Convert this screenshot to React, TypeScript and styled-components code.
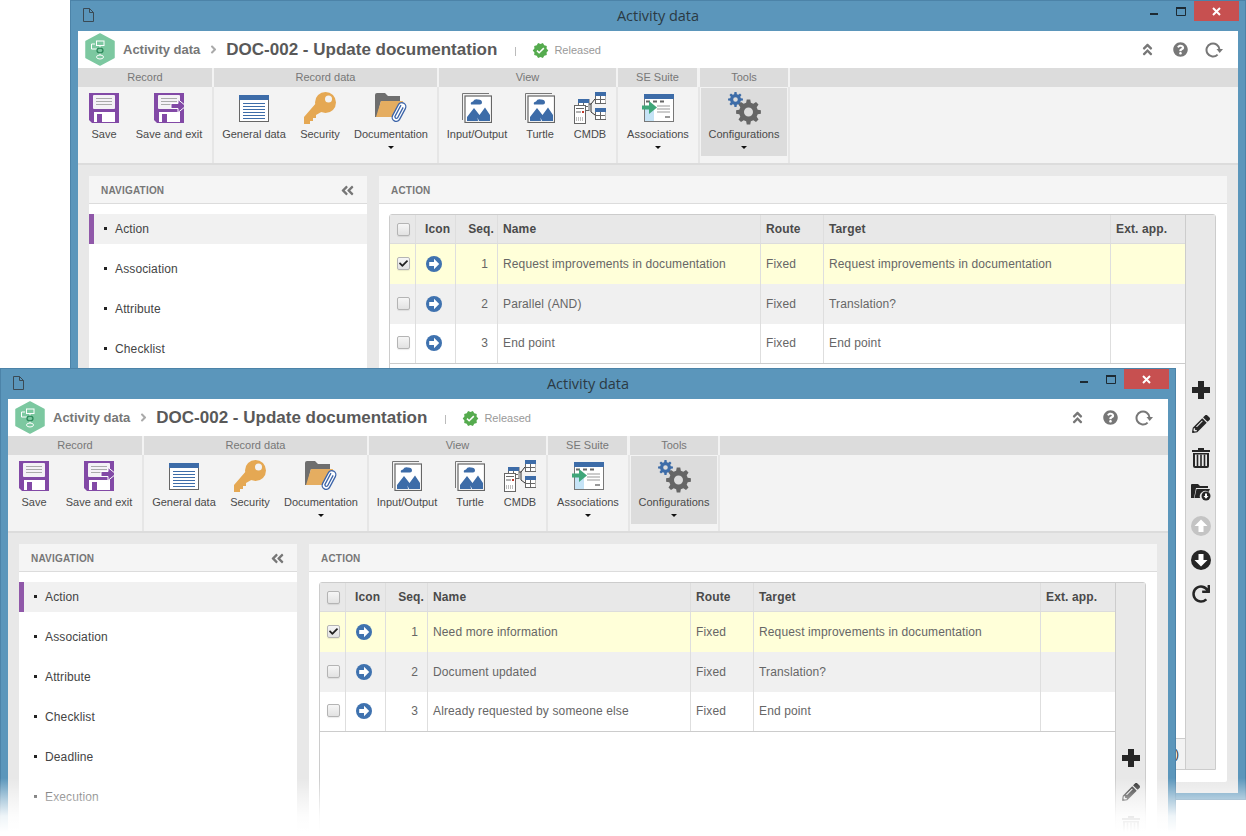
import * as React from "react";
import styled, { createGlobalStyle } from "styled-components";
import { FaPencilAlt, FaRedo, FaQuestionCircle, FaAngleDoubleUp, FaAngleDoubleLeft, FaCheck, FaAngleRight } from "react-icons/fa";
import { MdVerified } from "react-icons/md";

const BLEU_ICONE = "#3d6ca8";
const VIOLET = "#8249a6";
const ORANGE = "#e5a853";

const Global = createGlobalStyle`
    html, body { margin: 0; padding: 0; background: #fff; }
    body { font-family: "Liberation Sans", Arial, sans-serif; }
    * { box-sizing: border-box; }
`;

const Stage = styled.div`
    position: relative;
    width: 1246px;
    height: 836px;
    overflow: hidden;
    background: #fff;
`;

const Fade = styled.div`
    position: absolute;
    left: 0;
    right: 0;
    top: 778px;
    height: 58px;
    pointer-events: none;
    background: linear-gradient(to bottom, rgba(255,255,255,0) 0, rgba(255,255,255,.5) 20px, rgba(255,255,255,.9) 38px, #fff 54px);
`;

const Win = styled.div<{ $x: number; $y: number }>`
    position: absolute;
    left: ${p => p.$x}px;
    top: ${p => p.$y}px;
    width: 1176px;
    height: 800px;
    background: #5b96bb;
    border: 1px solid #4c83a8;
    padding: 0 7px 6px;
    display: flex;
    flex-direction: column;
`;

const TitleBar = styled.div`
    height: 30px;
    flex: none;
    display: grid;
    grid-template-columns: 1fr auto 1fr;
    align-items: center;
`;

const DocIcon = styled.div`
    padding: 0 0 3px 5px;
    display: flex;
`;

const TitleText = styled.div`
    font-family: "Open Sans", sans-serif;
    font-size: 14.5px;
    color: #2b3a44;
    padding-bottom: 1px;
`;

const WinControls = styled.div`
    justify-self: end;
    align-self: start;
    display: flex;
    align-items: flex-start;
    margin-right: -1px;
`;

const WinBtn = styled.div<{ $w: number }>`
    width: ${p => p.$w}px;
    height: 20px;
    display: flex;
    align-items: center;
    justify-content: center;
`;

const CloseBtn = styled(WinBtn)`
    background: #c75050;
    margin-left: 6px;
`;

const Client = styled.div`
    flex: 1;
    min-height: 0;
    background: #e8e8e8;
    display: flex;
    flex-direction: column;
`;

const Header = styled.div`
    height: 37px;
    flex: none;
    background: #fff;
    display: flex;
    align-items: center;
    padding: 0 8px 0 7px;
`;

const Crumb = styled.span`
    font-size: 13px;
    font-weight: bold;
    color: #777;
    margin-left: 8px;
`;

const CrumbArrow = styled.span`
    color: #aaa;
    display: flex;
    margin: 0 6px 0 7px;
`;

const DocTitle = styled.span`
    font-size: 17px;
    font-weight: bold;
    color: #595959;
`;

const Sep = styled.span`
    width: 1px;
    height: 9px;
    background: #bbb;
    margin: 3px 10px 0 18px;
`;

const Status = styled.span`
    display: flex;
    align-items: center;
    gap: 5px;
    font-size: 11px;
    color: #999;
    margin-top: 1px;
    margin-left: 6px;
`;

const HeaderTools = styled.div`
    margin-left: auto;
    display: flex;
    align-items: center;
    color: #777;
`;

const HeaderTool = styled.div`
    width: 33px;
    display: flex;
    justify-content: center;
`;

const Ribbon = styled.div`
    flex: none;
    display: flex;
    background: #f3f3f3;
    border-bottom: 2px solid #dcdcdc;
`;

const Group = styled.div<{ $w?: number }>`
    ${p => p.$w ? `width: ${p.$w}px; flex: none;` : "flex: 1;"}
    display: flex;
    flex-direction: column;
`;

const GroupHead = styled.div<{ $gap: number }>`
    height: 19px;
    line-height: 19px;
    background: #dcdcdc;
    margin-right: ${p => p.$gap}px;
    text-align: center;
    font-size: 11px;
    color: #777;
`;

const GroupBody = styled.div<{ $end?: boolean }>`
    height: 76px;
    padding-top: 1px;
    display: flex;
    border-right: ${p => p.$end ? "0" : "2px solid #e6e6e6"};
`;

const RibbonBtn = styled.div<{ $w: number; $active?: boolean }>`
    width: ${p => p.$w}px;
    height: 68px;
    flex: none;
    margin-left: ${p => p.$active ? 1 : 0}px;
    background: ${p => p.$active ? "#dcdcdc" : "transparent"};
    display: flex;
    flex-direction: column;
    align-items: center;
    padding-top: 2px;
    font-size: 11px;
    color: #4a4a4a;
`;

const RibbonIcon = styled.div`
    height: 36px;
    margin-bottom: 2px;
    display: flex;
    align-items: center;
    justify-content: center;
`;

const RibbonLabel = styled.div`
    line-height: 13px;
    white-space: nowrap;
`;

const Caret = styled.div`
    width: 0;
    height: 0;
    margin-top: 5px;
    border-left: 3px solid transparent;
    border-right: 3px solid transparent;
    border-top: 3px solid #111;
`;

const Body = styled.div`
    flex: 1;
    min-height: 0;
    display: flex;
    gap: 12px;
    padding: 11px;
`;

const Panel = styled.div<{ $w?: number }>`
    ${p => p.$w ? `width: ${p.$w}px; flex: none;` : "flex: 1; min-width: 0;"}
    background: #fff;
    border-radius: 2px;
    display: flex;
    flex-direction: column;
`;

const PanelHead = styled.div`
    height: 28px;
    flex: none;
    background: #f5f5f5;
    border-bottom: 1px solid #dcdcdc;
    padding: 2px 12px 0;
    display: flex;
    align-items: center;
    justify-content: space-between;
    font-size: 10px;
    letter-spacing: .2px;
    font-weight: bold;
    color: #777;
`;

const NavList = styled.div`
    padding-top: 10px;
    display: flex;
    flex-direction: column;
    gap: 10px;
`;

const NavItem = styled.div<{ $active?: boolean }>`
    height: 30px;
    display: flex;
    align-items: center;
    font-size: 12px;
    letter-spacing: .13px;
    color: #444;
    padding-left: ${p => p.$active ? 10 : 15}px;
    background: ${p => p.$active ? "#f1f1f1" : "transparent"};
    border-left: ${p => p.$active ? "5px solid #9058a9" : "0"};
    &::before {
        content: "";
        width: 3px;
        height: 3px;
        background: #222;
        margin: -1px 8px 0 0;
    }
`;

const GridWrap = styled.div`
    flex: 1;
    min-height: 0;
    margin: 10px 11px 12px 10px;
    border: 1px solid #ccc;
    border-radius: 3px 3px 0 3px;
    display: flex;
`;

const GridMain = styled.div`
    flex: 1;
    min-width: 0;
    display: flex;
    flex-direction: column;
`;

const COLONNES = "26px 40px 42px 263px 63px 287px 1fr";

const Row = styled.div<{ $bg: string; $h: number }>`
    display: grid;
    grid-template-columns: ${COLONNES};
    height: ${p => p.$h}px;
    flex: none;
    background: ${p => p.$bg};
`;

const HeadRow = styled(Row)`
    border-bottom: 1px solid #dcdcdc;
`;

const LastRow = styled(Row)`
    border-bottom: 1px solid #ccc;
`;

const Cell = styled.div<{ $align?: string; $head?: boolean; $pad?: string; $up?: boolean }>`
    display: flex;
    align-items: center;
    justify-content: ${p => p.$align || "flex-start"};
    padding: ${p => p.$pad || "0 5px"};
    font-size: 12px;
    letter-spacing: .13px;
    white-space: nowrap;
    font-weight: ${p => p.$head ? "bold" : "normal"};
    color: ${p => p.$head ? "#4a4a4a" : "#666"};
    border-right: 1px solid #dedede;
    ${LastRow} & { padding-bottom: 1px; }
    &:last-child { border-right: 0; }
`;

const Check = styled.span<{ $lift?: boolean }>`
    width: 13px;
    height: 13px;
    margin: ${p => p.$lift ? "-1px 0 1px 1px" : "0 0 0 1px"};
    border: 1px solid #b4b4b4;
    border-radius: 2px;
    background: linear-gradient(#f6f6f6, #e2e2e2);
    box-shadow: 0 1px 1px rgba(0,0,0,.08);
    display: flex;
    align-items: center;
    justify-content: center;
    color: #222;
`;

const GridSpace = styled.div`
    flex: 1;
`;

const GridFoot = styled.div`
    height: 31px;
    flex: none;
    background: #f3f3f3;
    border-top: 1px solid #ccc;
    display: flex;
    align-items: center;
    justify-content: flex-end;
    padding-right: 6px;
    font-size: 12px;
    color: #333;
`;

const SideTools = styled.div`
    width: 30px;
    flex: none;
    background: #e8e8e8;
    border-left: 1px solid #ccc;
    display: flex;
    flex-direction: column;
    align-items: center;
    justify-content: center;
`;

const SideTool = styled.div<{ $off?: boolean }>`
    height: 34px;
    display: flex;
    align-items: center;
    justify-content: center;
    color: ${p => p.$off ? "#c4c4c4" : "#262626"};
`;

/* ---- dessins ---- */

const Floppy = ({ arrow }: { arrow?: boolean }) => (
    <svg width="30" height="30" viewBox="0 0 30 30">
        <path d="M0 0H30V30H3L0 27Z" fill={VIOLET} />
        <rect x="4" y="2" width="22" height="14" rx="1" fill="#f4f1f6" />
        <path d="M7 5.500H23M7 8.500H23M7 11.500H23" stroke="#aaa" strokeWidth="1" />
        <rect x="5" y="19" width="21" height="10" fill="#fff" />
        <rect x="8" y="21" width="5" height="8" fill={VIOLET} />
        {arrow && <path d="M17 10.500H24V6.500L32 13 24 19.500V15.500H17Z" fill={VIOLET} stroke="#fff" strokeWidth="1" />}
    </svg>
);

const GeneralData = () => (
    <svg width="30" height="27" viewBox="0 0 30 27">
        <rect x=".5" y=".5" width="29" height="26" fill="#fff" stroke="#666" />
        <rect width="30" height="5" fill={BLEU_ICONE} />
        <path d="M4 8.500H26M4 11.500H26M4 14.500H26M4 17.500H26M4 20.500H26M4 23.500H26" stroke={BLEU_ICONE} strokeWidth="1.200" />
    </svg>
);

const KeyIcon = () => (
    <svg width="32" height="32" viewBox="0 0 32 32">
        <path fill={ORANGE} d="M13 10L0 25V32H6V29H9V26H12V23L19 19Z" />
        <circle cx="21.500" cy="10.500" r="10.500" fill={ORANGE} />
        <circle cx="24.500" cy="7" r="3.500" fill="#f3f3f3" />
    </svg>
);

const FolderClip = () => (
    <svg width="32" height="30" viewBox="0 0 32 30">
        <path d="M0 2Q0 0 2 0H10L13 3H25V8H6L2 24H0Z" fill="#6e6e6e" />
        <path d="M6 8H28L24 24H1Z" fill="#e5ad60" />
        <path d="M24 9H28V14H24Z" fill="#e5ad60" />
        <g transform="rotate(28 24 19)" fill="#fff" stroke="#3c64a8" strokeWidth="1.300">
            <rect x="20" y="9" width="8" height="20" rx="4" />
            <path d="M22.500 12V25Q24 27 25.500 25V13" fill="none" />
        </g>
    </svg>
);

const Picture = () => (
    <svg width="30" height="30" viewBox="0 0 30 30">
        <path d="M.5 27V.5H27" fill="none" stroke="#777" />
        <rect x="3" y="3" width="26.500" height="26.500" fill="#fff" stroke="#666" strokeWidth="1.200" />
        <path d="M5 28V24L12 15 17.500 22 23 14.500 28 22V28H17L15.500 24.500 16 28Z" fill={BLEU_ICONE} />
        <path d="M9 11.500Q8 9 11 8.500 12.500 5.500 16 6.500 20 6.500 20 9.500 20 11.500 18 11.500Z" fill={BLEU_ICONE} />
    </svg>
);

const MiniTable = ({ x, y }: { x: number; y: number }) => (
    <g transform={`translate(${x} ${y})`}>
        <rect x=".5" y=".5" width="10.500" height="11" fill="#fff" stroke="#666" />
        <rect width="11" height="4" fill={BLEU_ICONE} />
        <path d="M5.500 4V11M1 7.500H10" stroke="#666" />
    </g>
);

const Cmdb = () => (
    <svg width="32" height="32" viewBox="0 0 32 32">
        <path d="M12 12H17L21 7M17 12V20L21 23" fill="none" stroke="#333" />
        <MiniTable x={21} y={0} />
        <MiniTable x={21} y={16} />
        <MiniTable x={4} y={7} />
        <rect x=".5" y="13.500" width="11" height="18" fill="#fff" stroke="#666" />
        <path d="M2 16.500H10M2 20H7" stroke="#666" />
        <rect x="8" y="19" width="2" height="2" fill="#c0392b" />
        <path d="M2 26H10M2 28H10" stroke="#777" strokeDasharray="1 1" />
    </svg>
);

const AssocIcon = () => (
    <svg width="32" height="28" viewBox="0 0 32 28">
        <rect x="2.500" y=".5" width="29" height="27" fill="#fff" stroke="#777" />
        <rect x="2" width="30" height="5" fill={BLEU_ICONE} />
        <rect x="3" y="15" width="9" height="12" fill="#c5e3f6" />
        <path d="M4 7.500H8M11 7.500H15M18 7.500H22" stroke="#666" strokeWidth="2" />
        <path d="M15 12H28M15 15H28M15 18H28" stroke="#999" />
        <rect x="23" y="22" width="5" height="2" fill="#999" />
        <path d="M0 11.500H7V7L15 13.500 7 20V15.500H0Z" fill="#3fa679" />
    </svg>
);

function engrenage(cx: number, cy: number, rExt: number, rInt: number, rTrou: number, dents: number) {
    const pts: string[] = [];
    const pas = (Math.PI * 2) / dents;
    for (let i = 0; i < dents; i++) {
        const a = i * pas;
        const coin = (r: number, d: number) => {
            const t = a + d * pas;
            return `${(cx + r * Math.cos(t)).toFixed(2)} ${(cy + r * Math.sin(t)).toFixed(2)}`;
        };
        pts.push(coin(rInt, -0.32), coin(rExt, -0.18), coin(rExt, 0.18), coin(rInt, 0.32));
    }
    const trou = `M${cx - rTrou} ${cy}a${rTrou} ${rTrou} 0 1 0 ${rTrou * 2} 0a${rTrou} ${rTrou} 0 1 0 ${-rTrou * 2} 0Z`;
    return `M${pts.join("L")}Z${trou}`;
}

const Gears = () => (
    <svg width="33" height="34" viewBox="0 0 33 34">
        <path fillRule="evenodd" d={engrenage(7.500, 8.500, 7.500, 5.500, 2.300, 8)} fill={BLEU_ICONE} />
        <path fillRule="evenodd" d={engrenage(20.500, 21, 12.500, 9.500, 4.500, 8)} fill="#666" />
    </svg>
);

const Logo = () => (
    <svg width="30" height="33" viewBox="0 0 30 33">
        <path d="M15 1L29 8.500V24.500L15 32 1 24.500V8.500Z" fill="#7cc8a0" stroke="#7cc8a0" strokeLinejoin="round" strokeWidth="1.500" />
        <rect x="11.500" y="8" width="7.500" height="4.500" fill="#7cc8a0" stroke="#fff" />
        <path d="M6.500 11H10M6.500 11V16H12M15 12.500V15M15 20V22" fill="none" stroke="#fff" />
        <ellipse cx="15" cy="17.500" rx="3" ry="2.300" fill="#7cc8a0" stroke="#2f8a5c" strokeWidth="1.300" />
        <ellipse cx="15" cy="24" rx="3.500" ry="2" fill="#7cc8a0" stroke="#fff" />
    </svg>
);

const PageIcon = () => (
    <svg width="11" height="14" viewBox="0 0 11 14">
        <path d="M.5.5H6.500L10.500 4.500V13.500H.5ZM6.500.5V4.500H10.500" fill="none" stroke="#3a4a55" />
    </svg>
);

const ThinRefresh = () => (
    <svg width="18" height="16" viewBox="0 0 18 16">
        <path d="M12.600 12.600A6.500 6.500 0 1 1 14.500 7.500" fill="none" stroke="#777" strokeWidth="2" />
        <path d="M11.500 7H18L14.700 11Z" fill="#777" />
    </svg>
);

const FolderAdd = () => (
    <svg width="20" height="18" viewBox="0 0 20 18">
        <path d="M0 2Q0 1 1 1H7L9 3H17V5H5L3 15H0ZM5.500 6H19L17.500 9A5.500 5.500 0 0 0 9 15H3.500Z" fill="#262626" />
        <circle cx="15" cy="13" r="4.500" fill="#262626" />
        <path d="M14 10.500H16V13H17.500L15 15.700 12.500 13H14Z" fill="#fff" />
    </svg>
);

const PlusIcon = () => (
    <svg width="18" height="18" viewBox="0 0 18 18">
        <path d="M6 0H12V6H18V12H12V18H6V12H0V6H6Z" fill="currentColor" />
    </svg>
);

const TrashIcon = () => (
    <svg width="18" height="20" viewBox="0 0 18 20">
        <path d="M6 0H12V2H18V4H0V2H6Z" fill="currentColor" />
        <path d="M1 5H17V18Q17 20 15 20H3Q1 20 1 18Z" fill="currentColor" />
        <rect x="3" y="6.500" width="12" height="11.500" fill="#e8e8e8" />
        <path d="M5.500 6.500V18M9 6.500V18M12.500 6.500V18" stroke="currentColor" strokeWidth="1.600" />
    </svg>
);

const CircleArrow = ({ size, angle, color }: { size: number; angle: number; color?: string }) => (
    <svg width={size} height={size} viewBox="0 0 20 20">
        <circle cx="10" cy="10" r="10" fill={color || "currentColor"} />
        <path d="M4 7.500H10V3.500L16.500 10 10 16.500V12.500H4Z" fill="#fff" transform={`rotate(${angle} 10 10)`} />
    </svg>
);

/* ---- données ---- */

const NAV = ["Action", "Association", "Attribute", "Checklist", "Deadline", "Execution"];

type Ligne = { name: string; target: string };

const RibbonButton = ({ w, label, caret, active, children }: { w: number; label: string; caret?: boolean; active?: boolean; children: React.ReactNode }) => (
    <RibbonBtn $w={w} $active={active}>
        <RibbonIcon>{children}</RibbonIcon>
        <RibbonLabel>{label}</RibbonLabel>
        {caret && <Caret />}
    </RibbonBtn>
);

const GridRow = ({ ligne, index }: { ligne: Ligne; index: number }) => {
    const R = index === 2 ? LastRow : Row;
    const fond = ["#ffffd9", "#f0f0f0", "#fff"][index];
    return (
        <R $bg={fond} $h={40}>
            <Cell $align="center" $pad="0"><Check $lift>{index === 0 && <FaCheck size={9} />}</Check></Cell>
            <Cell $pad="0 0 0 10px"><CircleArrow size={16} angle={0} color="#3f72af" /></Cell>
            <Cell $align="flex-end" $pad="0 9px 0 0">{index + 1}</Cell>
            <Cell>{ligne.name}</Cell>
            <Cell>Fixed</Cell>
            <Cell>{ligne.target}</Cell>
            <Cell />
        </R>
    );
};

const Fenetre = ({ x, y, lignes, pied }: { x: number; y: number; lignes: Ligne[]; pied?: string }) => (
    <Win $x={x} $y={y}>
        <TitleBar>
            <DocIcon><PageIcon /></DocIcon>
            <TitleText>Activity data</TitleText>
            <WinControls>
                <WinBtn $w={40}>
                    <svg width="8" height="8" viewBox="0 0 8 8"><rect y="6" width="8" height="2" fill="#1d2a33" /></svg>
                </WinBtn>
                <WinBtn $w={14}>
                    <svg width="10" height="9" viewBox="0 0 10 9"><path d="M.5 1H9.500V8.500H.5Z" fill="none" stroke="#1d2a33" /><rect width="10" height="2" fill="#1d2a33" /></svg>
                </WinBtn>
                <CloseBtn $w={45}>
                    <svg width="9" height="9" viewBox="0 0 9 9"><path d="M1 1L8 8M8 1L1 8" stroke="#fff" strokeWidth="2" /></svg>
                </CloseBtn>
            </WinControls>
        </TitleBar>
        <Client>
            <Header>
                <Logo />
                <Crumb>Activity data</Crumb>
                <CrumbArrow><FaAngleRight size={13} /></CrumbArrow>
                <DocTitle>DOC-002 - Update documentation</DocTitle>
                <Sep />
                <Status><MdVerified size={17} color="#55ab4e" />Released</Status>
                <HeaderTools>
                    <HeaderTool><FaAngleDoubleUp size={15} /></HeaderTool>
                    <HeaderTool><FaQuestionCircle size={15} /></HeaderTool>
                    <HeaderTool><ThinRefresh /></HeaderTool>
                </HeaderTools>
            </Header>
            <Ribbon>
                <Group $w={136}>
                    <GroupHead $gap={2}>Record</GroupHead>
                    <GroupBody>
                        <RibbonButton w={52} label="Save"><Floppy /></RibbonButton>
                        <RibbonButton w={78} label="Save and exit"><Floppy arrow /></RibbonButton>
                    </GroupBody>
                </Group>
                <Group $w={225}>
                    <GroupHead $gap={2}>Record data</GroupHead>
                    <GroupBody>
                        <RibbonButton w={80} label="General data"><GeneralData /></RibbonButton>
                        <RibbonButton w={52} label="Security"><KeyIcon /></RibbonButton>
                        <RibbonButton w={90} label="Documentation" caret><FolderClip /></RibbonButton>
                    </GroupBody>
                </Group>
                <Group $w={179}>
                    <GroupHead $gap={2}>View</GroupHead>
                    <GroupBody>
                        <RibbonButton w={76} label="Input/Output"><Picture /></RibbonButton>
                        <RibbonButton w={50} label="Turtle"><Picture /></RibbonButton>
                        <RibbonButton w={50} label="CMDB"><Cmdb /></RibbonButton>
                    </GroupBody>
                </Group>
                <Group $w={82}>
                    <GroupHead $gap={3}>SE Suite</GroupHead>
                    <GroupBody>
                        <RibbonButton w={80} label="Associations" caret><AssocIcon /></RibbonButton>
                    </GroupBody>
                </Group>
                <Group $w={90}>
                    <GroupHead $gap={2}>Tools</GroupHead>
                    <GroupBody>
                        <RibbonButton w={86} label="Configurations" caret active><Gears /></RibbonButton>
                    </GroupBody>
                </Group>
                <Group>
                    <GroupHead $gap={0} />
                    <GroupBody $end />
                </Group>
            </Ribbon>
            <Body>
                <Panel $w={278}>
                    <PanelHead>
                        NAVIGATION
                        <FaAngleDoubleLeft size={15} />
                    </PanelHead>
                    <NavList>
                        {NAV.map((n, i) => <NavItem key={n} $active={i === 0}>{n}</NavItem>)}
                    </NavList>
                </Panel>
                <Panel>
                    <PanelHead>ACTION</PanelHead>
                    <GridWrap>
                        <GridMain>
                            <HeadRow $bg="#e8e8e8" $h={29}>
                                <Cell $align="center" $pad="0"><Check /></Cell>
                                <Cell $head $pad="0 0 0 9px">Icon</Cell>
                                <Cell $head $align="flex-end" $pad="0 3px 0 0">Seq.</Cell>
                                <Cell $head>Name</Cell>
                                <Cell $head>Route</Cell>
                                <Cell $head>Target</Cell>
                                <Cell $head>Ext. app.</Cell>
                            </HeadRow>
                            {lignes.map((l, i) => <GridRow key={l.name} ligne={l} index={i} />)}
                            <GridSpace />
                            <GridFoot>{pied}</GridFoot>
                        </GridMain>
                        <SideTools>
                            <SideTool><PlusIcon /></SideTool>
                            <SideTool><FaPencilAlt size={18} /></SideTool>
                            <SideTool><TrashIcon /></SideTool>
                            <SideTool><FolderAdd /></SideTool>
                            <SideTool $off><CircleArrow size={20} angle={-90} /></SideTool>
                            <SideTool><CircleArrow size={20} angle={90} /></SideTool>
                            <SideTool><FaRedo size={18} /></SideTool>
                        </SideTools>
                    </GridWrap>
                </Panel>
            </Body>
        </Client>
    </Win>
);

const DERRIERE: Ligne[] = [
    { name: "Request improvements in documentation", target: "Request improvements in documentation" },
    { name: "Parallel (AND)", target: "Translation?" },
    { name: "End point", target: "End point" },
];

const DEVANT: Ligne[] = [
    { name: "Need more information", target: "Request improvements in documentation" },
    { name: "Document updated", target: "Translation?" },
    { name: "Already requested by someone else", target: "End point" },
];

export default function App() {
    return (
        <Stage>
            <Global />
            <Fenetre x={70} y={0} lignes={DERRIERE} pied="(0)" />
            <Fenetre x={0} y={368} lignes={DEVANT} />
            <Fade />
        </Stage>
    );
}
